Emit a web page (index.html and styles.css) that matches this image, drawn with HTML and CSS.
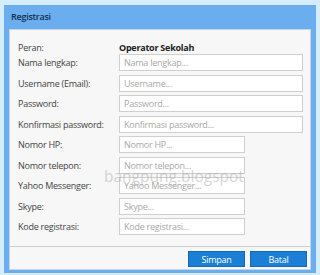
FILE: index.html
```html
<!DOCTYPE html>
<html lang="id">
<head>
    <meta charset="UTF-8">
    <title>Registrasi</title>
    <link rel="stylesheet" href="styles.css">
</head>
<body>
    <div class="dialog">
        <div class="title">Registrasi</div>
        <div class="content">
            <form class="form">
                <div class="row row-static">
                    <label>Peran:</label>
                    <span class="value">Operator Sekolah</span>
                </div>
                <div class="row">
                    <label for="nama">Nama lengkap:</label>
                    <input type="text" id="nama" placeholder="Nama lengkap...">
                </div>
                <div class="row">
                    <label for="username">Username (Email):</label>
                    <input type="text" id="username" placeholder="Username...">
                </div>
                <div class="row">
                    <label for="password">Password:</label>
                    <input type="password" id="password" placeholder="Password...">
                </div>
                <div class="row">
                    <label for="konfirmasi">Konfirmasi password:</label>
                    <input type="password" id="konfirmasi" placeholder="Konfirmasi password...">
                </div>
                <div class="row">
                    <label for="hp">Nomor HP:</label>
                    <input type="text" id="hp" class="short" placeholder="Nomor HP...">
                </div>
                <div class="row">
                    <label for="telepon">Nomor telepon:</label>
                    <input type="text" id="telepon" class="short" placeholder="Nomor telepon...">
                </div>
                <div class="row">
                    <label for="ym">Yahoo Messenger:</label>
                    <input type="text" id="ym" class="short" placeholder="Yahoo Messenger...">
                </div>
                <div class="row">
                    <label for="skype">Skype:</label>
                    <input type="text" id="skype" class="short" placeholder="Skype...">
                </div>
                <div class="row">
                    <label for="kode">Kode registrasi:</label>
                    <input type="text" id="kode" class="short" placeholder="Kode registrasi...">
                </div>
            </form>
            <div class="footer">
                <button type="button" class="btn">Simpan</button>
                <button type="button" class="btn">Batal</button>
            </div>
        </div>
        <div class="watermark">bangpung.blogspot</div>
    </div>
</body>
</html>
```

FILE: styles.css
```css
* {
    box-sizing: border-box;
    margin: 0;
    padding: 0;
}

body {
    font-family: 'Open Sans', 'Noto Sans', sans-serif;
    font-size: 9px;
    letter-spacing: -0.25px;
    background-color: #d5edfb;
    padding: 5px 4px 0 4px;
}

.dialog {
    position: relative;
    width: 312px;
    background-color: #6aaef0;
    padding: 0 5px 3px 5px;
}

.title {
    height: 24px;
    line-height: 23px;
    padding-left: 2px;
    color: #142f4d;
    font-weight: 600;
}

.content {
    height: 241px;
    background-color: #f7f7f7;
    border: 1px solid #c6d6e6;
    display: flex;
    flex-direction: column;
}

.form {
    flex: 1;
    padding: 10px 0 0 8px;
    display: flex;
    flex-direction: column;
    gap: 3.5px;
}

.row {
    display: flex;
    align-items: center;
    height: 17px;
}

.row-static {
    height: 14px;
    margin-bottom: -3.5px;
}

label {
    width: 101px;
    color: #444;
}

.value {
    color: #222;
    font-weight: bold;
}

input {
    width: 184px;
    height: 17px;
    padding: 0 4px;
    border: 1px solid #cfcfcf;
    background-color: #fff;
    font-family: inherit;
    font-size: 9px;
    letter-spacing: -0.25px;
    color: #333;
}

input::placeholder {
    color: #a8a8a8;
}

input.short {
    width: 126px;
}

.footer {
    height: 23px;
    border-top: 1px solid #cdcdcd;
    display: flex;
    justify-content: flex-end;
    align-items: flex-start;
    gap: 5px;
    padding: 4px 3px 0 0;
}

.btn {
    width: 57px;
    height: 16px;
    background-color: #1b7fd5;
    border: 1px solid #1468b5;
    color: #fff;
    font-family: inherit;
    font-size: 9px;
    letter-spacing: -0.25px;
    cursor: pointer;
}

.watermark {
    position: absolute;
    left: 100px;
    top: 160px;
    font-size: 15.5px;
    letter-spacing: 0;
    color: rgba(160, 160, 160, 0.45);
    pointer-events: none;
}
```
